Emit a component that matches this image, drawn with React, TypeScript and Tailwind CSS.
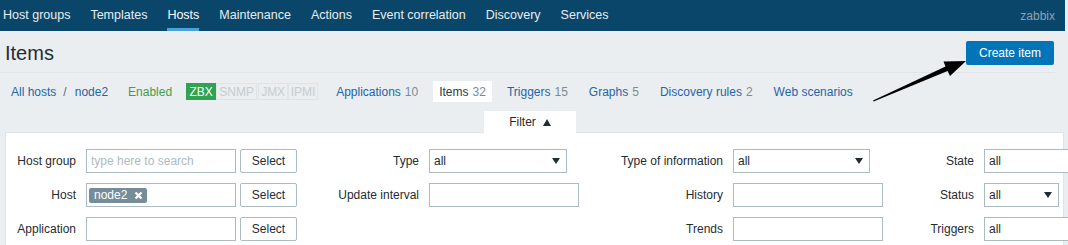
import React from "react";

const navItems = [
  "Host groups",
  "Templates",
  "Hosts",
  "Maintenance",
  "Actions",
  "Event correlation",
  "Discovery",
  "Services",
];

const tabs = [
  { name: "Applications", count: "10" },
  { name: "Items", count: "32", active: true },
  { name: "Triggers", count: "15" },
  { name: "Graphs", count: "5" },
  { name: "Discovery rules", count: "2" },
  { name: "Web scenarios", count: "" },
];

const Caret = () => (
  <svg width="8" height="6" viewBox="0 0 8 6" className="shrink-0">
    <path d="M0 0 L8 0 L4 6 Z" fill="#1f2c33" />
  </svg>
);

const Input = ({ w = "w-[150px]", children }: { w?: string; children?: React.ReactNode }) => (
  <div className={`${w} h-[24px] shrink-0 border border-[#acbbc2] bg-white flex items-center pl-[4px]`}>
    {children}
  </div>
);

const Select = ({ w }: { w: string }) => (
  <div className={`${w} h-[24px] shrink-0 border border-[#acbbc2] bg-white flex items-center justify-between pl-[4px] pr-[6px]`}>
    <span>all</span>
    <Caret />
  </div>
);

const SelectButton = () => (
  <div className="ml-[4px] w-[57px] h-[24px] border border-[#acbbc2] bg-white rounded-[2px] flex items-center justify-center">
    Select
  </div>
);

const Label = ({ children }: { children: React.ReactNode }) => (
  <div className="text-right pr-[10px] whitespace-nowrap">{children}</div>
);

export default function App() {
  return (
    <div className="relative w-[1068px] h-[245px] overflow-hidden bg-[#ebeef0] font-['Liberation_Sans',Arial,sans-serif] text-[12px] text-[#1f2c33]">
      {/* top nav */}
      <nav className="w-[1065px] h-[31px] bg-[#0a466a] flex pl-[3px] gap-[20px] text-[12.5px]">
        {navItems.map((n) => (
          <a
            key={n}
            className={`h-full flex items-center pt-[3px] border-b-[3px] whitespace-nowrap ${
              n === "Hosts" ? "text-white border-[#4aa3d8]" : "text-[#e8edf1] border-transparent"
            }`}
          >
            {n}
          </a>
        ))}
        <span className="ml-auto mr-[10px] self-center text-[12px] text-[#8ba3b3]">zabbix</span>
      </nav>

      {/* header */}
      <div className="w-[1055px] flex items-center justify-between pl-[5px] pr-[1px] pt-[10px] pb-[7px] border-b border-[#dfe4e7]">
        <h1 className="text-[20px] leading-[24px] text-[#1f2c33]">Items</h1>
        <button className="w-[88px] h-[24px] rounded-[2px] bg-[#0275b8] text-white text-[12px]">
          Create item
        </button>
      </div>

      {/* breadcrumbs */}
      <div className="flex items-center pl-[11px] pt-[8px] whitespace-nowrap">
        <a className="text-[#1f65a6]">All hosts</a>
        <span className="ml-[7px] text-[#5a6a75]">/</span>
        <a className="ml-[8px] text-[#1f65a6]">node2</a>
        <span className="ml-[20px] text-[#429e47]">Enabled</span>
        <div className="ml-[14px] flex h-[17px]">
          <span className="w-[30px] flex items-center justify-center bg-[#2fa352] text-white">ZBX</span>
          <span className="w-[41px] flex items-center justify-center border border-[#dfe4e7] text-[#c5ccd0]">SNMP</span>
          <span className="ml-[1px] w-[30px] flex items-center justify-center border border-[#dfe4e7] text-[#c5ccd0]">JMX</span>
          <span className="w-[30px] flex items-center justify-center border border-[#dfe4e7] text-[#c5ccd0]">IPMI</span>
        </div>
        <div className="ml-[12px] flex gap-[9px]">
          {tabs.map((t) => (
            <div
              key={t.name}
              className={`h-[21px] px-[6px] flex items-center ${t.active ? "bg-white" : ""}`}
            >
              <span className={t.active ? "text-[#2d3b44]" : "text-[#1f65a6]"}>{t.name}</span>
              {t.count && <span className="ml-[4px] text-[#768d99]">{t.count}</span>}
            </div>
          ))}
        </div>
      </div>

      {/* filter tab */}
      <div className="mt-[9px] ml-[484px] w-[92px] h-[22px] bg-white relative z-10 -mb-px flex items-center justify-center gap-[7px]">
        <span>Filter</span>
        <svg width="8" height="7" viewBox="0 0 8 7">
          <path d="M0 7 L4 0 L8 7 Z" fill="#1f2c33" />
        </svg>
      </div>

      {/* filter panel */}
      <div className="ml-[5px] w-[1059px] h-[140px] bg-white border border-[#dfe4e7] pt-[16px] flex items-start">
        <div className="grid grid-cols-[80px_auto] gap-y-[10px] items-center">
          <Label>Host group</Label>
          <div className="flex">
            <Input>
              <span className="text-[#acbbc2]">type here to search</span>
            </Input>
            <SelectButton />
          </div>
          <Label>Host</Label>
          <div className="flex">
            <Input>
              <span className="-ml-[2px] h-[15px] pl-[5px] pr-[4px] rounded-[2px] bg-[#768d99] text-white flex items-center gap-[7px]">
                node2
                <svg width="9" height="9" viewBox="0 0 9 9">
                  <path d="M1.5 1.5 L7.5 7.5 M7.5 1.5 L1.5 7.5" stroke="white" strokeWidth="2.2" />
                </svg>
              </span>
            </Input>
            <SelectButton />
          </div>
          <Label>Application</Label>
          <div className="flex">
            <Input />
            <SelectButton />
          </div>
        </div>

        <div className="grid grid-cols-[132px_auto] gap-y-[10px] items-center">
          <Label>Type</Label>
          <Select w="w-[138px]" />
          <Label>Update interval</Label>
          <Input />
        </div>

        <div className="grid grid-cols-[154px_auto] gap-y-[10px] items-center">
          <Label>Type of information</Label>
          <Select w="w-[137px]" />
          <Label>History</Label>
          <Input />
          <Label>Trends</Label>
          <Input />
        </div>

        <div className="grid grid-cols-[101px_auto] gap-y-[10px] items-center">
          <Label>State</Label>
          <Input>all</Input>
          <Label>Status</Label>
          <Select w="w-[75px]" />
          <Label>Triggers</Label>
          <Input>all</Input>
        </div>
      </div>

      {/* annotation arrow */}
      <svg
        className="absolute left-0 top-0 pointer-events-none"
        width="1068"
        height="245"
        viewBox="0 0 1068 245"
      >
        <path
          d="M873 100.5 L945.5 66.5 L943.5 61.5 L966 61 L950 76 L947.6 71 L873.6 101.5 Z"
          fill="#000"
        />
      </svg>
    </div>
  );
}
